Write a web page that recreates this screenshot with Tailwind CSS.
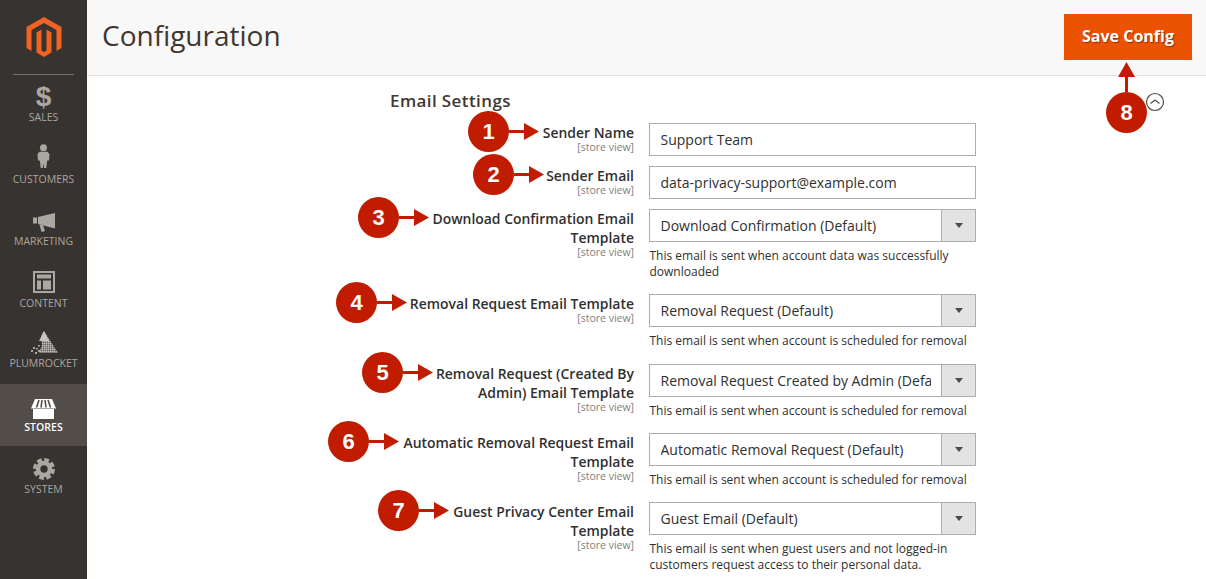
<!DOCTYPE html>
<html lang="en">
<head>
    <meta charset="UTF-8">
    <title>Configuration</title>
    <script src="https://cdn.jsdelivr.net/npm/@tailwindcss/browser@4"></script>
</head>
<body class="bg-white font-['Open_Sans',sans-serif] text-[#303030]">
<div class="relative flex h-[579px] w-[1206px] overflow-hidden">

    <!-- Sidebar -->
    <aside class="flex w-[87px] shrink-0 flex-col bg-[#373330] text-[10.500px] leading-[14px] text-[#aaa6a0]">
        <div class="mx-[13px] flex h-[75px] justify-center border-b border-[#736f6b] pt-[17px]">
            <svg class="h-[40px] w-[36px]" viewBox="0 0 35 40" fill="#f26322"><path d="M17.500 0L35 10V31L30 34V13L17.500 6L5 13V34L0 31V10Z"/><path d="M10 15.500L15 12.500V33.500L17.500 35L20 33.500V12.500L25 15.500V35.500L17.500 40L10 35.500Z"/></svg>
        </div>
        <a class="flex h-[61px] flex-col items-center">
            <span class="h-[35px] pt-[10px] font-['Liberation_Sans',sans-serif] text-[28px] font-bold leading-[24px]">$</span>
            <span>SALES</span>
        </a>
        <a class="flex h-[62px] flex-col items-center pt-[8px]">
            <svg class="h-[24px] w-[13px]" viewBox="0 0 14 26" fill="#aaa6a0"><circle cx="7" cy="4" r="3.800"/><path d="M2.500 8.500H11.500L13.500 11L13 18H11L10 26H7.700L7 21L6.300 26H4L3 18H1L0.500 11Z"/></svg>
            <span class="mt-[4px]">CUSTOMERS</span>
        </a>
        <a class="flex h-[62px] flex-col items-center pt-[15px]">
            <svg class="h-[19px] w-[22px]" viewBox="0 0 22 19" fill="#aaa6a0"><path d="M0 4.500H4V10.500H0Z"/><path d="M5 4L22 0V15.500L5 11Z"/><path d="M6.500 11.500L10 12.300L12 18L8.500 19Z"/></svg>
            <span class="mt-[2px]">MARKETING</span>
        </a>
        <a class="flex h-[62px] flex-col items-center pt-[11px]">
            <svg class="h-[22px] w-[22px]" viewBox="0 0 22 22" fill="#aaa6a0"><path fill-rule="evenodd" d="M0 0H22V22H0ZM2 2V20H20V2Z"/><path d="M4 3.500H18V7.500H4ZM4 9.500H8V18.500H4ZM10 9.500H18V18.500H10Z"/></svg>
            <span class="mt-[3px]">CONTENT</span>
        </a>
        <a class="flex h-[62px] flex-col items-center pt-[9px]">
            <svg class="h-[24px] w-[28px]" viewBox="0 0 28 24">
                <defs><pattern id="dots" width="2" height="2" patternUnits="userSpaceOnUse"><rect width="1.600" height="1.600" fill="#c8c5c1"/></pattern></defs>
                <path d="M14 0L28 22H9L12 14L11 5Z" fill="url(#dots)"/>
                <path d="M14 0L9 10H19Z" fill="#c8c5c1"/>
                <path d="M8 14h2v1.500H8zM6 17h2v1.500H6zM3 16h2v2H3zM8 19h2v2H8zM1 19h2v2H1zM5 21h2v2H5z" fill="#aaa6a0"/>
            </svg>
            <span class="mt-[1px]">PLUMROCKET</span>
        </a>
        <a class="flex h-[62px] flex-col items-center bg-[#524d49] pt-[15px] text-white">
            <svg class="h-[20px] w-[25px]" viewBox="0 0 25 20" fill="#fff"><path d="M4 0H21L25 9.500H0Z"/><path d="M2 10H23V20H2Z"/><path d="M8 1L5.500 8.500M11 1L10 8.500M14 1L15 8.500M17 1L19.500 8.500" stroke="#524d49" stroke-width="1.600"/></svg>
            <span class="mt-[1px] font-semibold">STORES</span>
        </a>
        <a class="flex h-[62px] flex-col items-center pt-[12px]">
            <svg class="h-[22px] w-[22px]" viewBox="0 0 24 24" fill="none" stroke="#aaa6a0"><circle cx="12" cy="12" r="6.500" stroke-width="5"/><circle cx="12" cy="12" r="10" stroke-width="4" stroke-dasharray="5.200 2.650"/></svg>
            <span class="mt-[2px]">SYSTEM</span>
        </a>
    </aside>

    <main class="flex min-w-0 flex-1 flex-col">
        <!-- Page header -->
        <header class="flex h-[76px] shrink-0 items-start justify-between border-b border-[#e3e3e3] bg-[#f8f8f8] pl-[15px] pr-[14px]">
            <h1 class="pt-[16px] text-[28px] font-normal leading-[38px] text-[#41362f]">Configuration</h1>
            <button class="mt-[14px] h-[46px] w-[128px] bg-[#eb5202] pb-[2px] text-[16px] font-bold text-white [text-shadow:1px_1px_1px_rgba(0,0,0,0.4)]">Save Config</button>
        </header>

        <!-- Form -->
        <section class="relative flex-1 pl-[303px] pt-[14px]">
            <h2 class="h-[33px] text-[17px] font-semibold leading-[22px] tracking-[0.4px] text-[#41362f]">Email Settings</h2>
            <svg class="absolute left-[1058px] top-[16px] h-[20px] w-[20px]" viewBox="0 0 20 20" fill="none" stroke="#514943"><circle cx="10" cy="10" r="8.500" stroke-width="1.200"/><path d="M5.500 11.500L10 8L14.500 11.500" stroke-width="1.200"/></svg>

            <div class="-ml-[303px] flex flex-col">
                <div class="grid grid-cols-[547px_327px] gap-x-[15px] pb-[10px]">
                    <div class="text-right"><p class="text-[13.950px] font-semibold leading-[19px]">Sender Name</p><p class="text-[10.500px] leading-[11px] text-[#808080]">[store view]</p></div>
                    <input class="h-[33px] border border-[#adadad] bg-white px-[10.500px] text-[14px]" value="Support Team">
                </div>
                <div class="grid grid-cols-[547px_327px] gap-x-[15px] pb-[10px]">
                    <div class="text-right"><p class="text-[13.950px] font-semibold leading-[19px]">Sender Email</p><p class="text-[10.500px] leading-[11px] text-[#808080]">[store view]</p></div>
                    <input class="h-[33px] border border-[#adadad] bg-white px-[10.500px] text-[14px]" value="data-privacy-support@example.com">
                </div>
                <div class="grid grid-cols-[547px_327px] gap-x-[15px] pb-[14px]">
                    <div class="text-right"><p class="text-[13.950px] font-semibold leading-[19px]">Download Confirmation Email<br>Template</p><p class="text-[10.500px] leading-[11px] text-[#808080]">[store view]</p></div>
                    <div>
                        <div class="relative">
                            <select class="h-[33px] w-full appearance-none border border-[#adadad] bg-white pl-[10.500px] pr-[44px] text-[14px]"><option>Download Confirmation (Default)</option></select>
                            <span class="pointer-events-none absolute inset-y-0 right-0 flex w-[35px] items-center justify-center border border-[#adadad] bg-[#e3e3e3]"><i class="border-x-[4.500px] border-t-[5px] border-x-transparent border-t-[#514943]"></i></span>
                        </div>
                        <p class="mt-[6px] pl-[0.500px] text-[12px] leading-[16px]">This email is sent when account data was successfully downloaded</p>
                    </div>
                </div>
                <div class="grid grid-cols-[547px_327px] gap-x-[15px] pb-[15px]">
                    <div class="text-right"><p class="text-[13.950px] font-semibold leading-[19px]">Removal Request Email Template</p><p class="text-[10.500px] leading-[11px] text-[#808080]">[store view]</p></div>
                    <div>
                        <div class="relative">
                            <select class="h-[33px] w-full appearance-none border border-[#adadad] bg-white pl-[10.500px] pr-[44px] text-[14px]"><option>Removal Request (Default)</option></select>
                            <span class="pointer-events-none absolute inset-y-0 right-0 flex w-[35px] items-center justify-center border border-[#adadad] bg-[#e3e3e3]"><i class="border-x-[4.500px] border-t-[5px] border-x-transparent border-t-[#514943]"></i></span>
                        </div>
                        <p class="mt-[6px] pl-[0.500px] text-[12px] leading-[16px]">This email is sent when account is scheduled for removal</p>
                    </div>
                </div>
                <div class="grid grid-cols-[547px_327px] gap-x-[15px] pb-[14px]">
                    <div class="text-right"><p class="text-[13.950px] font-semibold leading-[19px]">Removal Request (Created By<br>Admin) Email Template</p><p class="text-[10.500px] leading-[11px] text-[#808080]">[store view]</p></div>
                    <div>
                        <div class="relative">
                            <select class="h-[33px] w-full appearance-none border border-[#adadad] bg-white pl-[10.500px] pr-[44px] text-[14px]"><option>Removal Request Created by Admin (Default)</option></select>
                            <span class="pointer-events-none absolute inset-y-0 right-0 flex w-[35px] items-center justify-center border border-[#adadad] bg-[#e3e3e3]"><i class="border-x-[4.500px] border-t-[5px] border-x-transparent border-t-[#514943]"></i></span>
                        </div>
                        <p class="mt-[6px] pl-[0.500px] text-[12px] leading-[16px]">This email is sent when account is scheduled for removal</p>
                    </div>
                </div>
                <div class="grid grid-cols-[547px_327px] gap-x-[15px] pb-[14px]">
                    <div class="text-right"><p class="text-[13.950px] font-semibold leading-[19px]">Automatic Removal Request Email<br>Template</p><p class="text-[10.500px] leading-[11px] text-[#808080]">[store view]</p></div>
                    <div>
                        <div class="relative">
                            <select class="h-[33px] w-full appearance-none border border-[#adadad] bg-white pl-[10.500px] pr-[44px] text-[14px]"><option>Automatic Removal Request (Default)</option></select>
                            <span class="pointer-events-none absolute inset-y-0 right-0 flex w-[35px] items-center justify-center border border-[#adadad] bg-[#e3e3e3]"><i class="border-x-[4.500px] border-t-[5px] border-x-transparent border-t-[#514943]"></i></span>
                        </div>
                        <p class="mt-[6px] pl-[0.500px] text-[12px] leading-[16px]">This email is sent when account is scheduled for removal</p>
                    </div>
                </div>
                <div class="grid grid-cols-[547px_327px] gap-x-[15px]">
                    <div class="text-right"><p class="text-[13.950px] font-semibold leading-[19px]">Guest Privacy Center Email<br>Template</p><p class="text-[10.500px] leading-[11px] text-[#808080]">[store view]</p></div>
                    <div>
                        <div class="relative">
                            <select class="h-[33px] w-full appearance-none border border-[#adadad] bg-white pl-[10.500px] pr-[44px] text-[14px]"><option>Guest Email (Default)</option></select>
                            <span class="pointer-events-none absolute inset-y-0 right-0 flex w-[35px] items-center justify-center border border-[#adadad] bg-[#e3e3e3]"><i class="border-x-[4.500px] border-t-[5px] border-x-transparent border-t-[#514943]"></i></span>
                        </div>
                        <p class="mt-[6px] pl-[0.500px] text-[12px] leading-[16px]">This email is sent when guest users and not logged-in customers request access to their personal data.</p>
                    </div>
                </div>
            </div>
        </section>
    </main>

    <!-- Numbered callouts drawn over the screenshot -->
    <div class="absolute left-[468px] top-[111px] flex items-center">
        <span class="flex h-[41px] w-[41px] items-center justify-center rounded-full bg-[#c11b00] font-['Liberation_Sans',sans-serif] text-[22px] font-bold text-white">1</span>
        <svg class="h-[17px] w-[30px]" viewBox="0 0 30 17" fill="#c11b00"><path d="M0 7H15V0L30 8.500L15 17V10H0Z"/></svg>
    </div>
    <div class="absolute left-[473px] top-[154px] flex items-center">
        <span class="flex h-[41px] w-[41px] items-center justify-center rounded-full bg-[#c11b00] font-['Liberation_Sans',sans-serif] text-[22px] font-bold text-white">2</span>
        <svg class="h-[17px] w-[30px]" viewBox="0 0 30 17" fill="#c11b00"><path d="M0 7H15V0L30 8.500L15 17V10H0Z"/></svg>
    </div>
    <div class="absolute left-[358px] top-[197px] flex items-center">
        <span class="flex h-[41px] w-[41px] items-center justify-center rounded-full bg-[#c11b00] font-['Liberation_Sans',sans-serif] text-[22px] font-bold text-white">3</span>
        <svg class="h-[17px] w-[30px]" viewBox="0 0 30 17" fill="#c11b00"><path d="M0 7H15V0L30 8.500L15 17V10H0Z"/></svg>
    </div>
    <div class="absolute left-[336px] top-[282px] flex items-center">
        <span class="flex h-[41px] w-[41px] items-center justify-center rounded-full bg-[#c11b00] font-['Liberation_Sans',sans-serif] text-[22px] font-bold text-white">4</span>
        <svg class="h-[17px] w-[30px]" viewBox="0 0 30 17" fill="#c11b00"><path d="M0 7H15V0L30 8.500L15 17V10H0Z"/></svg>
    </div>
    <div class="absolute left-[362px] top-[352px] flex items-center">
        <span class="flex h-[41px] w-[41px] items-center justify-center rounded-full bg-[#c11b00] font-['Liberation_Sans',sans-serif] text-[22px] font-bold text-white">5</span>
        <svg class="h-[17px] w-[30px]" viewBox="0 0 30 17" fill="#c11b00"><path d="M0 7H15V0L30 8.500L15 17V10H0Z"/></svg>
    </div>
    <div class="absolute left-[328px] top-[421px] flex items-center">
        <span class="flex h-[41px] w-[41px] items-center justify-center rounded-full bg-[#c11b00] font-['Liberation_Sans',sans-serif] text-[22px] font-bold text-white">6</span>
        <svg class="h-[17px] w-[30px]" viewBox="0 0 30 17" fill="#c11b00"><path d="M0 7H15V0L30 8.500L15 17V10H0Z"/></svg>
    </div>
    <div class="absolute left-[378px] top-[490px] flex items-center">
        <span class="flex h-[41px] w-[41px] items-center justify-center rounded-full bg-[#c11b00] font-['Liberation_Sans',sans-serif] text-[22px] font-bold text-white">7</span>
        <svg class="h-[17px] w-[30px]" viewBox="0 0 30 17" fill="#c11b00"><path d="M0 7H15V0L30 8.500L15 17V10H0Z"/></svg>
    </div>
    <div class="absolute left-[1106px] top-[62px] flex flex-col items-center">
        <svg class="h-[30px] w-[17px]" viewBox="0 0 17 30" fill="#c11b00"><path d="M7 30V15H0L8.500 0L17 15H10V30Z"/></svg>
        <span class="flex h-[41px] w-[41px] items-center justify-center rounded-full bg-[#c11b00] font-['Liberation_Sans',sans-serif] text-[22px] font-bold text-white">8</span>
    </div>
</div>
</body>
</html>
